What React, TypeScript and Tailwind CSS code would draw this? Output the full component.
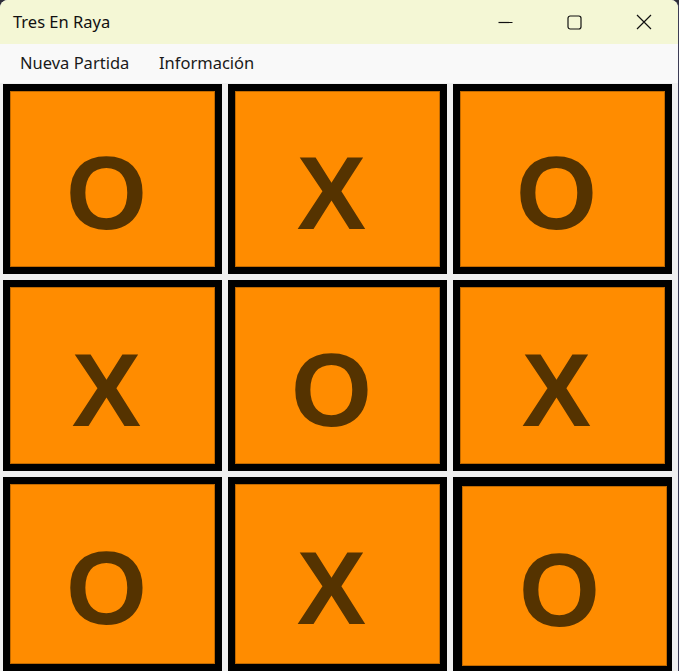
import React from "react";

const cells = ["O", "X", "O", "X", "O", "X", "O", "X", "O"];

export default function App() {
  return (
    <div className="w-[679px] h-[671px] bg-[#2e2e3a] overflow-hidden">
      <div className="w-[679px] h-[671px] rounded-t-[8px] overflow-hidden flex flex-col bg-[#f0f0f0] border-r border-[#3c3c55]">
        {/* Title bar */}
        <div className="h-[44px] shrink-0 bg-[#f4f7d5] flex items-center">
          <div
            className="pl-[13px] text-[16.5px] text-[#111] leading-none"
            style={{ fontFamily: '"Noto Sans", "Open Sans", sans-serif' }}
          >
            Tres En Raya
          </div>
          <div className="ml-auto flex h-full">
            <div className="w-[69px] h-full flex items-center justify-center">
              <svg width="15" height="15" viewBox="0 0 15 15">
                <line x1="0.5" y1="7.5" x2="14.5" y2="7.5" stroke="#111" strokeWidth="1.2" />
              </svg>
            </div>
            <div className="w-[69px] h-full flex items-center justify-center">
              <svg width="15" height="15" viewBox="0 0 15 15">
                <rect x="1" y="1" width="13" height="13" rx="2.2" fill="none" stroke="#111" strokeWidth="1.2" />
              </svg>
            </div>
            <div className="w-[69px] h-full flex items-center justify-center">
              <svg width="16" height="16" viewBox="0 0 16 16">
                <path d="M1 1 L15 15 M15 1 L1 15" stroke="#111" strokeWidth="1.2" fill="none" />
              </svg>
            </div>
          </div>
        </div>
        {/* Menu bar */}
        <div
          className="h-[39px] shrink-0 bg-[#f9f9f9] flex items-center pl-[20px] text-[16.5px] text-[#1a1a1a]"
          style={{ fontFamily: '"Noto Sans", "Open Sans", sans-serif' }}
        >
          <div className="w-[139px]">Nueva Partida</div>
          <div>Información</div>
        </div>
        {/* Board */}
        <div className="pl-[3px] pt-[1px] grid grid-cols-[repeat(3,219px)] grid-rows-[190px_191px_194px] gap-x-[6px] gap-y-[6px]">
          {cells.map((c, i) => {
            const pressed = i === 8;
            return (
              <div
                key={i}
                className={
                  pressed
                    ? "border-black border-t-[9px] border-l-[9px] border-r-[5px] border-b-[5px] bg-[#ff8c00] shadow-[inset_0_0_0_1px_#c26a00] flex items-center justify-center pt-[28px] pr-[10px]"
                    : "border-black border-[7px] bg-[#ff8c00] shadow-[inset_0_0_0_1px_#c26a00] flex items-center justify-center pt-[28px] pr-[12px]"
                }
              >
                <span
                  className="text-[104px] font-bold leading-none text-[#553300]"
                  style={{ fontFamily: '"Liberation Sans", Arial, sans-serif' }}
                >
                  {c}
                </span>
              </div>
            );
          })}
        </div>
      </div>
    </div>
  );
}
